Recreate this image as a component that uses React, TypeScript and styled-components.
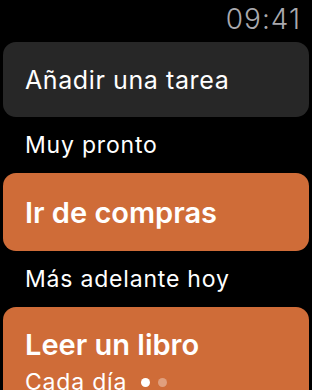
import styled, { createGlobalStyle } from "styled-components";

const GlobalStyle = createGlobalStyle`
    html, body {
        margin:0;
        padding:0;
        background:#000;
    }
    body {
        font-family:Inter, "Noto Sans", sans-serif;
        color:#fff;
        overflow:hidden;
    }
`;

const Screen = styled.div`
    width:312px;
    height:390px;
    overflow:hidden;
    background:#000;
`;

const StatusBar = styled.div`
    height:42px;
    display:flex;
    justify-content:flex-end;
    align-items:flex-start;
    padding:2px 11px 0 0;
    box-sizing:border-box;
`;

const Time = styled.span`
    font-size:28px;
    font-weight:300;
    color:#a9a9ae;
    letter-spacing:1px;
`;

const Card = styled.div<{ $tone: "dark" | "orange" }>`
    margin:0 3px;
    border-radius:13px;
    background:${(p) => (p.$tone === "dark" ? "#272727" : "#cf6c38")};
    padding:0 20px 0 22px;
    box-sizing:border-box;
    display:flex;
    flex-direction:column;
    justify-content:center;
`;

const AddLabel = styled.span`
    font-size:25px;
    font-weight:400;
    letter-spacing:0.6px;
`;

const TaskTitle = styled.span`
    font-size:29px;
    font-weight:600;
    letter-spacing:0;
`;

const Section = styled.div`
    height:56px;
    display:flex;
    align-items:center;
    padding-left:25px;
    font-size:23px;
    letter-spacing:0.8px;
`;

const SubRow = styled.div`
    display:flex;
    align-items:center;
    gap:14px;
    font-size:23px;
    letter-spacing:0.8px;
    margin-top:6px;
`;

const Dots = styled.div`
    display:flex;
    gap:8px;
    align-items:center;
`;

const Dot = styled.span<{ $active?: boolean }>`
    width:9px;
    height:9px;
    border-radius:50%;
    background:${(p) => (p.$active ? "#fff" : "rgba(255,255,255,0.35)")};
`;

export default function App() {
    return (
        <Screen>
            <GlobalStyle />
            <StatusBar>
                <Time>09:41</Time>
            </StatusBar>
            <Card $tone="dark" style={{ height: 75 }}>
                <AddLabel>Añadir una tarea</AddLabel>
            </Card>
            <Section>Muy pronto</Section>
            <Card $tone="orange" style={{ height: 78 }}>
                <TaskTitle>Ir de compras</TaskTitle>
            </Card>
            <Section>Más adelante hoy</Section>
            <Card $tone="orange" style={{ height: 110, justifyContent: "flex-start", paddingTop: 20 }}>
                <TaskTitle>Leer un libro</TaskTitle>
                <SubRow>
                    Cada día
                    <Dots>
                        <Dot $active />
                        <Dot />
                    </Dots>
                </SubRow>
            </Card>
        </Screen>
    );
}
